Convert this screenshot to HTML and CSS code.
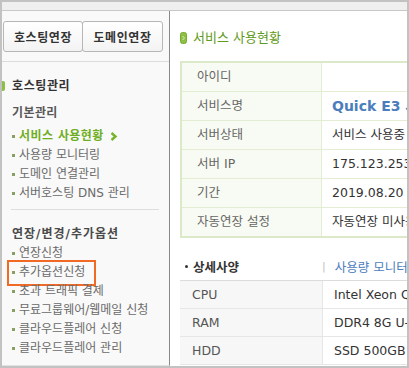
FILE: index.html
```html
<!DOCTYPE html>
<html lang="ko">
<head>
<meta charset="utf-8">
<title>서비스 사용현황</title>
<link rel="stylesheet" href="styles.css">
</head>
<body>
<div class="frame">
  <div class="topbar"></div>
  <div class="layout">
    <aside class="side">
      <div class="side-btns">
        <button class="btn">호스팅연장</button><button class="btn btn-2">도메인연장</button>
      </div>
      <h2 class="side-title"><span class="side-ico"></span>호스팅관리</h2>
      <h3 class="grp-title">기본관리</h3>
      <ul class="menu">
        <li class="active">서비스 사용현황 <svg class="chev" width="8" height="9" viewBox="0 0 8 9"><path d="M1.5 1 L5.5 4.5 L1.5 8" fill="none" stroke="#78b42a" stroke-width="2.4"/></svg></li>
        <li>사용량 모니터링</li>
        <li>도메인 연결관리</li>
        <li>서버호스팅 DNS 관리</li>
      </ul>
      <hr class="sep">
      <h3 class="grp-title grp-2">연장/변경/추가옵션</h3>
      <ul class="menu menu-2">
        <li>연장신청</li>
        <li class="hl">추가옵션신청</li>
        <li>초과 트래픽 결제</li>
        <li>무료그룹웨어/웹메일 신청</li>
        <li>클라우드플레어 신청</li>
        <li>클라우드플레어 관리</li>
      </ul>
    </aside>
    <main class="main">
      <h1 class="page-title"><svg class="title-ico" width="7" height="12" viewBox="0 0 7 12"><rect x="0.5" y="0.5" width="6" height="11" rx="2" fill="#8dbf45" stroke="#7aac34"/><path d="M2.5 4 L4.5 6 L2.5 8" fill="none" stroke="#d8efb8" stroke-width="1"/></svg>서비스 사용현황</h1>
      <div class="info-table">
        <div class="row"><div class="lbl">아이디</div><div class="val"></div></div>
        <div class="row"><div class="lbl">서비스명</div><div class="val val-name">Quick E3 서버</div></div>
        <div class="row"><div class="lbl">서버상태</div><div class="val">서비스 사용중</div></div>
        <div class="row"><div class="lbl">서버 IP</div><div class="val">175.123.253.10</div></div>
        <div class="row"><div class="lbl">기간</div><div class="val">2019.08.20 ~ 2020.08.19</div></div>
        <div class="row"><div class="lbl">자동연장 설정</div><div class="val">자동연장 미사용</div></div>
      </div>
      <div class="sub-head">
        <div class="sub-left"><span class="dot"></span>상세사양</div>
        <span class="bar">|</span>
        <span class="sub-link">사용량 모니터링</span>
      </div>
      <div class="spec-table">
        <div class="srow"><div class="slbl">CPU</div><div class="sval">Intel Xeon Quad Core</div></div>
        <div class="srow"><div class="slbl">RAM</div><div class="sval">DDR4 8G U-DIMM</div></div>
        <div class="srow"><div class="slbl">HDD</div><div class="sval">SSD 500GB</div></div>
      </div>
    </main>
  </div>
</div>
</body>
</html>
```

FILE: styles.css
```css
* { box-sizing: border-box; }
html, body { margin: 0; padding: 0; background: #fff; }
body {
  font-family: "DejaVu Sans", "Noto Sans CJK KR", sans-serif;
  color: #333;
}
.frame {
  width: 409px;
  height: 368px;
  border: 2px solid #c2c2c2;
  overflow: hidden;
  display: flex;
  flex-direction: column;
  background: #fff;
}
.topbar {
  height: 9px;
  flex: none;
  background: #efefef;
  border-bottom: 1px solid #c8c8c8;
}
.layout {
  flex: 1;
  display: flex;
  min-height: 0;
}
/* Sidebar */
.side {
  width: 168px;
  flex: none;
  background: #f9f9f9;
  border-right: 1px solid #8a8a8a;
  border-bottom: 1px solid #e2e2e2;
  position: relative;
}
.side-btns {
  display: flex;
  padding: 10px 0 9px 1px;
  border-bottom: 1px solid #dcdcdc;
}
.btn {
  width: 80px;
  height: 31px;
  padding: 0;
  border: 1px solid #b6b6b6;
  border-radius: 3px;
  background: linear-gradient(#ffffff, #f3f3f3);
  font-family: inherit;
  font-size: 12px;
  font-weight: bold;
  letter-spacing: 0.6px;
  color: #333;
}
.btn-2 { width: 81px; margin-left: -1px; }
.side-title {
  margin: 0;
  padding: 15px 0 0 10px;
  font-size: 12px;
  font-weight: bold;
  letter-spacing: 0.6px;
  line-height: 18px;
  color: #333;
  position: relative;
}
.side-ico {
  position: absolute;
  left: -3px;
  top: 19px;
  width: 6px;
  height: 10px;
  border-radius: 2px;
  background: #8dbf45;
}
.grp-title {
  margin: 9px 0 0 10px;
  font-size: 12px;
  font-weight: bold;
  letter-spacing: 0.4px;
  line-height: 18px;
  color: #585858;
}
.grp-2 { margin-top: 15px; color: #4a4a4a; letter-spacing: 1px; }
.menu {
  list-style: none;
  margin: 5px 0 0;
  padding: 0 0 0 10px;
}
.menu-2 { margin-top: 1px; }
.menu li {
  position: relative;
  padding-left: 7px;
  font-size: 12px;
  line-height: 19px;
  height: 19px;
  color: #6a6a6a;
  white-space: nowrap;
}
.menu li::before {
  content: "";
  position: absolute;
  left: 0;
  top: 8px;
  width: 3px;
  height: 3px;
  background: #88a060;
}
.menu li.active {
  color: #6fae22;
  font-weight: bold;
  letter-spacing: 0.4px;
}
.chev { vertical-align: -1px; margin-left: 2px; }
.menu li.hl::after {
  content: "";
  position: absolute;
  left: -5px;
  top: -3px;
  width: 85px;
  height: 22px;
  border: 2px solid #f06a26;
}
.sep {
  margin: 6px 10px 0 9px;
  border: 0;
  border-top: 1px solid #dedede;
  height: 0;
}
/* Main */
.main {
  flex: 1;
  min-width: 0;
  padding: 18px 0 0 10px;
  overflow: hidden;
}
.page-title {
  margin: 0;
  display: flex;
  align-items: center;
  gap: 6px;
  font-size: 13px;
  font-weight: normal;
  line-height: 18px;
  color: #5f9a20;
  white-space: nowrap;
}
.info-table {
  margin-top: 14px;
  width: 340px;
  border: 2px solid #dbe9c8;
  border-right: 0;
}
.row {
  display: flex;
  height: 29px;
  border-top: 1px solid #e2edd4;
}
.row:first-child { height: 28px; border-top: 0; }
.lbl {
  width: 140px;
  flex: none;
  background: #f8fbf3;
  border-right: 1px solid #e2edd4;
  padding-left: 15px;
  font-size: 12.5px;
  line-height: 28px;
  color: #666;
}
.val {
  flex: 1;
  padding-left: 10px;
  font-size: 12.5px;
  line-height: 28px;
  color: #333;
  white-space: nowrap;
}
.val-name {
  font-size: 14px;
  font-weight: bold;
  color: #4b7dbc;
}
.sub-head {
  margin-top: 19px;
  display: flex;
  align-items: center;
  height: 18px;
  white-space: nowrap;
}
.sub-left {
  width: 142px;
  flex: none;
  display: flex;
  align-items: center;
  padding-left: 5px;
  font-size: 12.5px;
  font-weight: bold;
  color: #333;
}
.dot {
  width: 3px;
  height: 3px;
  border-radius: 50%;
  background: #333;
  margin-right: 5px;
}
.bar { color: #c4c4c4; font-size: 11px; }
.sub-link {
  margin-left: 9px;
  font-size: 12.5px;
  color: #4b7dbc;
}
.spec-table {
  margin-top: 5px;
  width: 340px;
  border-top: 1px solid #dcdcdc;
}
.srow {
  display: flex;
  height: 28px;
  border-bottom: 1px solid #e6e6e6;
}
.slbl {
  width: 143px;
  flex: none;
  background: #f7f7f7;
  border-right: 1px solid #e6e6e6;
  padding-left: 12px;
  font-size: 12.5px;
  line-height: 27px;
  color: #555;
}
.sval {
  flex: 1;
  padding-left: 11px;
  font-size: 12.5px;
  line-height: 27px;
  color: #333;
  white-space: nowrap;
}
```
